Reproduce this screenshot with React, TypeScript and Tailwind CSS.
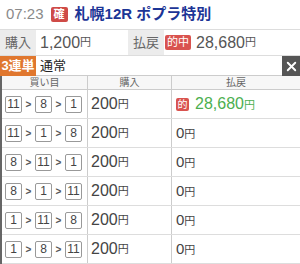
import { X } from "lucide-react";

const rows = [
  { nums: ["11", "8", "1"], pay: "28,680", hit: true },
  { nums: ["11", "1", "8"], pay: "0", hit: false },
  { nums: ["8", "11", "1"], pay: "0", hit: false },
  { nums: ["8", "1", "11"], pay: "0", hit: false },
  { nums: ["1", "11", "8"], pay: "0", hit: false },
  { nums: ["1", "8", "11"], pay: "0", hit: false },
];

function NumBox({ n }: { n: string }) {
  return (
    <span className="flex h-[17px] w-[17px] items-center justify-center rounded-[2px] border border-[#999] text-[12px] leading-none text-[#444]">
      {n}
    </span>
  );
}

function Arrow() {
  return <span className="w-[13px] text-center text-[10px] font-bold text-[#555]">&gt;</span>;
}

export default function App() {
  return (
    <div className="h-[264px] w-[300px] overflow-hidden bg-white text-[#333]" style={{ fontFamily: '"Liberation Sans", "Noto Sans CJK JP", sans-serif' }}>
      <div className="flex h-[29px] items-center gap-[7px] pl-[6px]">
        <span className="text-[15px] text-[#8a8a8a]">07:23</span>
        <span className="flex h-[15px] w-[17px] items-center justify-center rounded-[2px] bg-[#cf4b47] text-[11px] font-bold text-white">確</span>
        <span className="text-[15px] font-bold text-[#1c3596]">札幌12R ポプラ特別</span>
      </div>
      <div className="flex h-[27px] items-stretch border-y border-[#ddd]">
        <div className="flex w-[36px] items-center justify-center bg-[#ececec] text-[13px] text-[#666]">購入</div>
        <div className="flex w-[92px] items-center pl-[4px] text-[16px] text-[#555]">
          1,200<span className="text-[11px]">円</span>
        </div>
        <div className="flex w-[36px] items-center justify-center bg-[#ececec] text-[13px] text-[#666]">払戻</div>
        <div className="flex flex-1 items-center pl-[1px] text-[16px] text-[#555]">
          <span className="mr-[5px] flex h-[15px] items-center rounded-[2px] bg-[#d9534f] px-[2px] text-[11px] text-white">的中</span>
          28,680<span className="text-[11px]">円</span>
        </div>
      </div>
      <div className="flex h-[20px] items-stretch">
        <div className="flex w-[36px] items-center justify-center bg-[#e0772e] text-[13px] font-bold text-white">3連単</div>
        <div className="flex flex-1 items-center border-b border-[#ccc] pl-[4px] text-[13px] text-[#222]">通常</div>
        <div className="flex w-[18px] items-center justify-center bg-[#555] text-white">
          <X size={15} strokeWidth={3} />
        </div>
      </div>
      <div className="border-l-[2px] border-[#666]">
        <div className="grid h-[14px] grid-cols-[86px_84px_1fr] border-b border-[#ccc] bg-[#f7f7f7] text-[10px] leading-[14px] text-[#666]">
          <div className="border-r border-[#ccc] text-center">買い目</div>
          <div className="border-r border-[#ccc] text-center">購入</div>
          <div className="text-center">払戻</div>
        </div>
        {rows.map((r, i) => (
          <div key={i} className="grid h-[29px] grid-cols-[86px_84px_1fr] border-b border-[#ddd]">
            <div className="flex items-center border-r border-[#ccc] pl-[3px]">
              <NumBox n={r.nums[0]} />
              <Arrow />
              <NumBox n={r.nums[1]} />
              <Arrow />
              <NumBox n={r.nums[2]} />
            </div>
            <div className="flex items-center border-r border-[#ccc] pl-[3px] text-[16px] text-[#444]">
              200<span className="text-[11px]">円</span>
            </div>
            <div className="flex items-center pl-[4px]">
              {r.hit && (
                <span className="mr-[6px] flex h-[13px] w-[13px] items-center justify-center rounded-[2px] bg-[#d9534f] text-[10px] text-white">的</span>
              )}
              <span className={r.hit ? "text-[16px] text-[#4caf50]" : "text-[15px] text-[#444]"}>
                {r.pay}
                <span className="text-[11px]">円</span>
              </span>
            </div>
          </div>
        ))}
      </div>
    </div>
  );
}
